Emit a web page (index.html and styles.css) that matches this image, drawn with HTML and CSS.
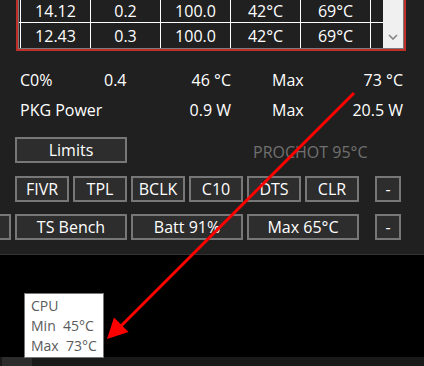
FILE: index.html
```html
<!DOCTYPE html>
<html lang="en">
<head>
    <meta charset="UTF-8">
    <meta name="viewport" content="width=device-width, initial-scale=1.0">
    <title>ThrottleStop</title>
    <link rel="stylesheet" href="styles.css">
</head>
<body>
    <div class="app">
        <section class="panel">
            <div class="log">
                <div class="log-inner">
                    <div class="rows">
                        <div class="row first">
                            <span class="cell">14.12</span>
                            <span class="cell">0.2</span>
                            <span class="cell">100.0</span>
                            <span class="cell">42°C</span>
                            <span class="cell">69°C</span>
                            <span class="cell end"></span>
                        </div>
                        <div class="row">
                            <span class="cell">12.43</span>
                            <span class="cell">0.3</span>
                            <span class="cell">100.0</span>
                            <span class="cell">42°C</span>
                            <span class="cell">69°C</span>
                            <span class="cell end"></span>
                        </div>
                    </div>
                    <div class="vscroll">
                        <svg width="10" height="6" viewBox="0 0 10 6"><polyline points="1,1 5,5 9,1" fill="none" stroke="#858585" stroke-width="1.6"/></svg>
                    </div>
                </div>
            </div>

            <div class="stats">
                <div class="stat">
                    <span>C0%</span>
                    <span>0.4</span>
                    <span class="right">46 °C</span>
                    <span></span>
                    <span>Max</span>
                    <span class="right">73 °C</span>
                </div>
                <div class="stat">
                    <span>PKG Power</span>
                    <span></span>
                    <span class="right">0.9 W</span>
                    <span></span>
                    <span>Max</span>
                    <span class="right">20.5 W</span>
                </div>
            </div>

            <div class="limits-row">
                <button class="btn wide">Limits</button>
                <span class="prochot">PROCHOT 95°C</span>
            </div>

            <div class="btn-row">
                <button class="btn">FIVR</button>
                <button class="btn">TPL</button>
                <button class="btn">BCLK</button>
                <button class="btn">C10</button>
                <button class="btn">DTS</button>
                <button class="btn">CLR</button>
                <button class="btn small">-</button>
            </div>
            <div class="btn-row">
                <button class="btn wide cut"></button>
                <button class="btn wide">TS Bench</button>
                <button class="btn wide">Batt 91%</button>
                <button class="btn wide">Max 65°C</button>
                <button class="btn small">-</button>
            </div>
        </section>

        <section class="graph">
            <div class="tip">
                <div class="tip-line">CPU</div>
                <div class="tip-line">Min  45°C</div>
                <div class="tip-line">Max  73°C</div>
            </div>
        </section>
        <div class="hscroll"><div class="thumb"></div></div>

        <svg class="arrow" width="424" height="366" viewBox="0 0 424 366">
            <line x1="354" y1="93" x2="121" y2="326" stroke="#ff0000" stroke-width="3"/>
            <polygon points="107,339 114,317.5 128.5,332" fill="#ff0000"/>
        </svg>
    </div>
</body>
</html>
```

FILE: styles.css
```css
*{
    margin: 0;
    padding: 0;
    box-sizing: border-box;
}
body{
    background-color: #000;
    font-family: "Open Sans", "Noto Sans", sans-serif;
    font-size: 16px;
    color: white;
    overflow: hidden;
}
.app{
    position: relative;
    width: 424px;
    height: 366px;
}
.panel{
    height: 255px;
    background-color: #202020;
    border-bottom: 1px solid #333;
}

/* log table */
.log{
    margin-left: 16px;
    width: 390px;
    border: 2px solid #c0302a;
    border-top: none;
}
.log-inner{
    display: flex;
    border: 1px solid #7a7a7a;
    border-top: none;
}
.rows{
    width: 364px;
    padding-left: 1px;
}
.row{
    display: flex;
    height: 25px;
    margin-left: -1px;
    padding-left: 1px;
}
.row.first{
    height: 23px;
    border-bottom: 1px solid white;
}
.cell{
    width: 70px;
    border-left: 1px solid white;
    display: flex;
    align-items: center;
    justify-content: center;
    line-height: 1;
}
.cell.end{
    width: 13px;
}
.vscroll{
    width: 20px;
    background-color: #f0f0f0;
    display: flex;
    align-items: flex-end;
    justify-content: center;
    padding-bottom: 8px;
}

/* stats */
.stats{
    margin-top: 14px;
    padding-left: 20px;
}
.stat{
    display: grid;
    grid-template-columns: 84px 60px 67px 41px 68px 63px;
    height: 30px;
    line-height: 30px;
    white-space: nowrap;
}
.right{
    text-align: right;
}

/* buttons */
.btn{
    font: inherit;
    color: white;
    background-color: #2d2d2d;
    border: 2px solid #777;
    height: 26px;
    width: 54px;
    line-height: 1;
    white-space: nowrap;
}
.btn.wide{
    width: 112px;
}
.btn.small{
    width: 26px;
    margin-left: 12px;
}
.btn.cut{
    margin-left: -116px;
}
.limits-row{
    display: flex;
    align-items: center;
    margin-top: 12px;
    padding-left: 15px;
}
.prochot{
    margin-left: 126px;
    margin-top: 4px;
    color: #707070;
}
.btn-row{
    display: flex;
    gap: 4px;
    margin-top: 13px;
    padding-left: 15px;
}
.btn-row + .btn-row{
    margin-top: 12px;
}

/* graph */
.graph{
    position: relative;
    height: 102px;
    background-color: #000;
}
.tip{
    position: absolute;
    left: 24px;
    top: 38px;
    width: 80px;
    height: 65px;
    z-index: 2;
    background-color: white;
    border: 1px solid #767676;
    padding: 2px 0 0 6px;
    color: #5a5a5a;
    font-size: 14px;
    line-height: 20px;
}
.tip-line{
    white-space: pre;
}
.hscroll{
    height: 9px;
    background-color: #191919;
    padding-left: 2px;
}
.thumb{
    width: 30px;
    height: 9px;
    background-color: #2c2c2c;
}
.arrow{
    position: absolute;
    left: 0;
    top: 0;
    pointer-events: none;
    z-index: 3;
}
```
